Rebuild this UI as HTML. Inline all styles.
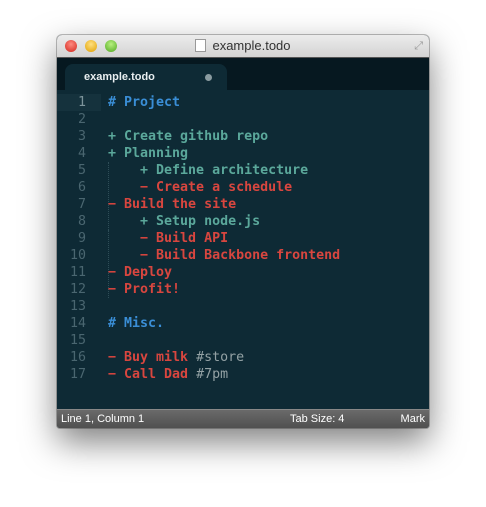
<!DOCTYPE html>
<html><head><style>
html,body{margin:0;padding:0;width:486px;height:507px;background:#fff;overflow:hidden}
.win{position:absolute;left:57px;top:35px;width:372px;height:393px;border-radius:5px 5px 3px 3px;box-shadow:0 14px 34px rgba(0,0,0,.5),0 0 0 1px rgba(0,0,0,.25);overflow:hidden;background:#0e2a35}
.title{position:absolute;left:0;top:0;width:372px;height:22px;background:linear-gradient(#ececec,#d3d3d3);border-bottom:1px solid #555;font:13px "Liberation Sans",sans-serif;color:#333;text-align:center;line-height:22px}
.dot{position:absolute;top:5px;width:12px;height:12px;border-radius:50%}
.tabbar{position:absolute;left:0;top:23px;width:372px;height:32px;background:#061820}
.tab{position:absolute;left:8px;top:6px;width:162px;height:26px;background:#0e2a35;border-radius:8px 8px 0 0;font:bold 11px "Liberation Sans",sans-serif;color:#e8eef0;line-height:26px}
.ed{position:absolute;left:0;top:55px;width:372px;height:319px;background:#0e2a35;font:bold 13.3px "DejaVu Sans Mono",monospace}
.ln{position:absolute;left:0;width:29px;text-align:right;color:#4a6670;font-weight:normal}
.tx{position:absolute;left:51px;white-space:pre}
.g{color:#5ba89b}.r{color:#d8463f}.b{color:#3a8ed6}.h{color:#93a1a4;font-weight:normal}
.status{position:absolute;left:0;top:374px;width:372px;height:19px;background:linear-gradient(#6a6a6a,#4e4e4e);border-top:1px solid #888;font:11px "Liberation Sans",sans-serif;color:#fff;line-height:19px}
</style></head><body>
<div class="win">
<div class="title">
<div class="dot" style="left:8px;background:radial-gradient(circle at 50% 35%,#ff8a80,#d2261c)"></div>
<div class="dot" style="left:28px;background:radial-gradient(circle at 50% 35%,#ffe080,#e0a000)"></div>
<div class="dot" style="left:48px;background:radial-gradient(circle at 50% 35%,#b8f080,#50a820)"></div>
<span style="display:inline-block;width:9px;height:11px;background:#fff;border:1px solid #999;vertical-align:-2px;margin-right:6px"></span>example.todo
<span style="position:absolute;right:6px;top:0;color:#999;font-size:11px">⤢</span>
</div>
<div class="tabbar"><div class="tab"><span style="margin-left:19px">example.todo</span><span style="position:absolute;left:140px;top:10px;width:7px;height:7px;border-radius:50%;background:#8a9ba0"></span></div></div>
<div class="ed">
<div style="position:absolute;left:0;top:4px;width:44px;height:17px;background:#15323d"></div>
<div style="position:absolute;left:51px;top:72px;height:100px;border-left:1px dotted #2e4d57"></div>
<div style="position:absolute;left:51px;top:140px;height:68px;border-left:1px dotted #2e4d57"></div>
</div>
<div class="status"><span style="position:absolute;left:4px">Line 1, Column 1</span><span style="position:absolute;left:233px">Tab Size: 4</span><span style="position:absolute;right:4px">Mark</span></div>
</div>
<script>
var L=[['b','# Project'],[],['g','+ Create github repo'],['g','+ Planning'],['g','    + Define architecture'],['r','    − Create a schedule'],['r','− Build the site'],['g','    + Setup node.js'],['r','    − Build API'],['r','    − Build Backbone frontend'],['r','− Deploy'],['r','− Profit!'],[],['b','# Misc.'],[],['r','x'],['r','x']];
var e=document.querySelector('.ed'),h='';
L.forEach(function(l,i){var t=4+i*17;h+='<div class="ln" style="top:'+t+'px;line-height:17px;'+(i==0?'color:#7d949b':'')+'">'+(i+1)+'</div>';
if(l.length){var s=l[1];if(i==15)s='− Buy milk <span class="h">#store</span>';if(i==16)s='− Call Dad <span class="h">#7pm</span>';
h+='<div class="tx '+l[0]+'" style="top:'+t+'px;line-height:17px">'+s+'</div>';}});
e.innerHTML+=h;
</script>
</body></html>
